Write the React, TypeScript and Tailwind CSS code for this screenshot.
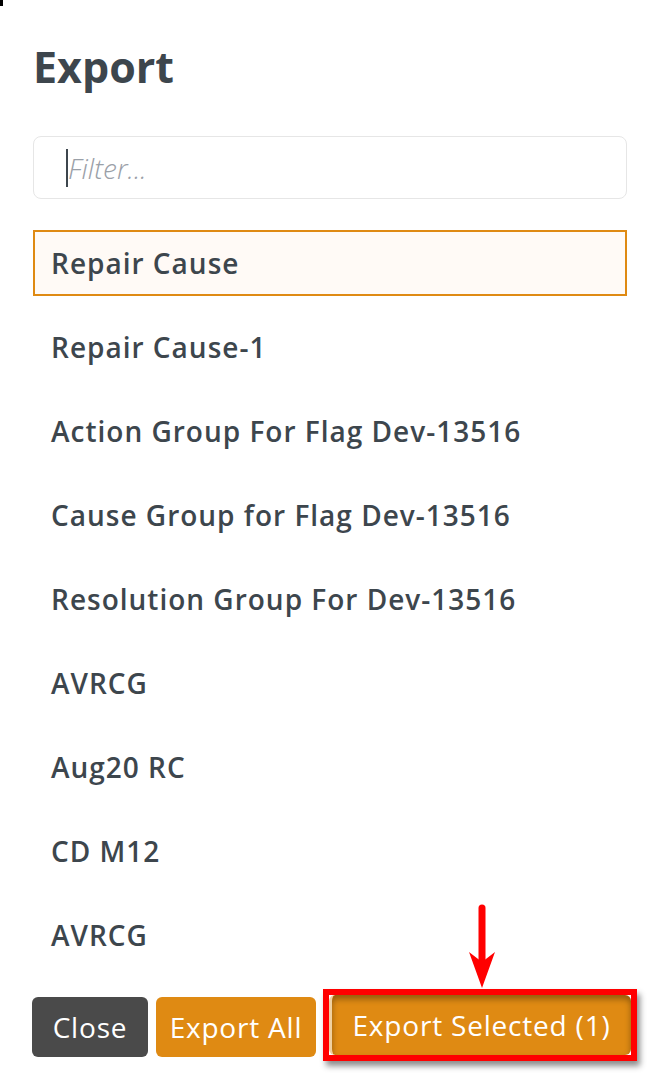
import React from "react";

const items = [
  "Repair Cause",
  "Repair Cause-1",
  "Action Group For Flag Dev-13516",
  "Cause Group for Flag Dev-13516",
  "Resolution Group For Dev-13516",
  "AVRCG",
  "Aug20 RC",
  "CD M12",
  "AVRCG",
];

const App: React.FC = () => {
  return (
    <div className="relative w-[650px] h-[1084px] bg-white overflow-hidden font-['Open_Sans',sans-serif] text-[#3d464d]">
      <div className="absolute left-0 top-0 w-[3px] h-[6px] bg-black" />
      <div className="pl-[33px] pr-[23px] pt-[42px]">
        <h1 className="text-[43px] leading-[50px] font-bold">Export</h1>

        <div className="mt-[44px] h-[63px] border border-[#e6e6e6] rounded-[8px] flex items-center px-[32px]">
          <span className="w-[2px] h-[38px] bg-[#3d464d]" />
          <span className="italic text-[28px] text-[#9aa0a8] font-light">Filter...</span>
        </div>

        <ul className="mt-[31px]">
          {items.map((item, i) =>
            i === 0 ? (
              <li
                key={i}
                className="h-[66px] mb-[9px] flex items-center px-[16px] text-[28px] tracking-[1px] font-semibold border-2 border-[#df8a13] bg-[#fffaf6]"
              >
                {item}
              </li>
            ) : (
              <li key={i} className="h-[84px] flex items-center px-[18px] text-[28px] tracking-[1px] font-semibold">
                {item}
              </li>
            )
          )}
        </ul>
      </div>

      <div className="absolute left-[32px] top-[997px] flex gap-[8px] text-[28px] tracking-[0.8px] text-white">
        <button className="h-[60px] w-[116px] rounded-[6px] bg-[#4a4a4a]">Close</button>
        <button className="h-[60px] w-[160px] rounded-[6px] bg-[#df8a13]">Export All</button>
      </div>

      {/* annotation */}
      <div className="absolute left-[323px] top-[989px] w-[314px] h-[72px] border-[6px] border-[#ff0000] shadow-[3px_5px_6px_rgba(0,0,0,0.45)]">
        <div className="w-full h-full bg-[#df8a13] rounded-[6px] border-l-[3px] border-[#f0d0a0] flex items-center justify-center text-[28px] tracking-[0.8px] text-white shadow-[inset_0_4px_6px_rgba(0,0,0,0.35)]">
          Export Selected (1)
        </div>
      </div>
      <svg className="absolute left-[466px] top-[900px]" width="32" height="92" viewBox="0 0 32 92">
        <line x1="16" y1="8" x2="16" y2="70" stroke="#ff0000" strokeWidth="7" strokeLinecap="round" />
        <path d="M3 52 L16 88 L29 52 L16 62 Z" fill="#ff0000" />
      </svg>
    </div>
  );
};

export default App;
